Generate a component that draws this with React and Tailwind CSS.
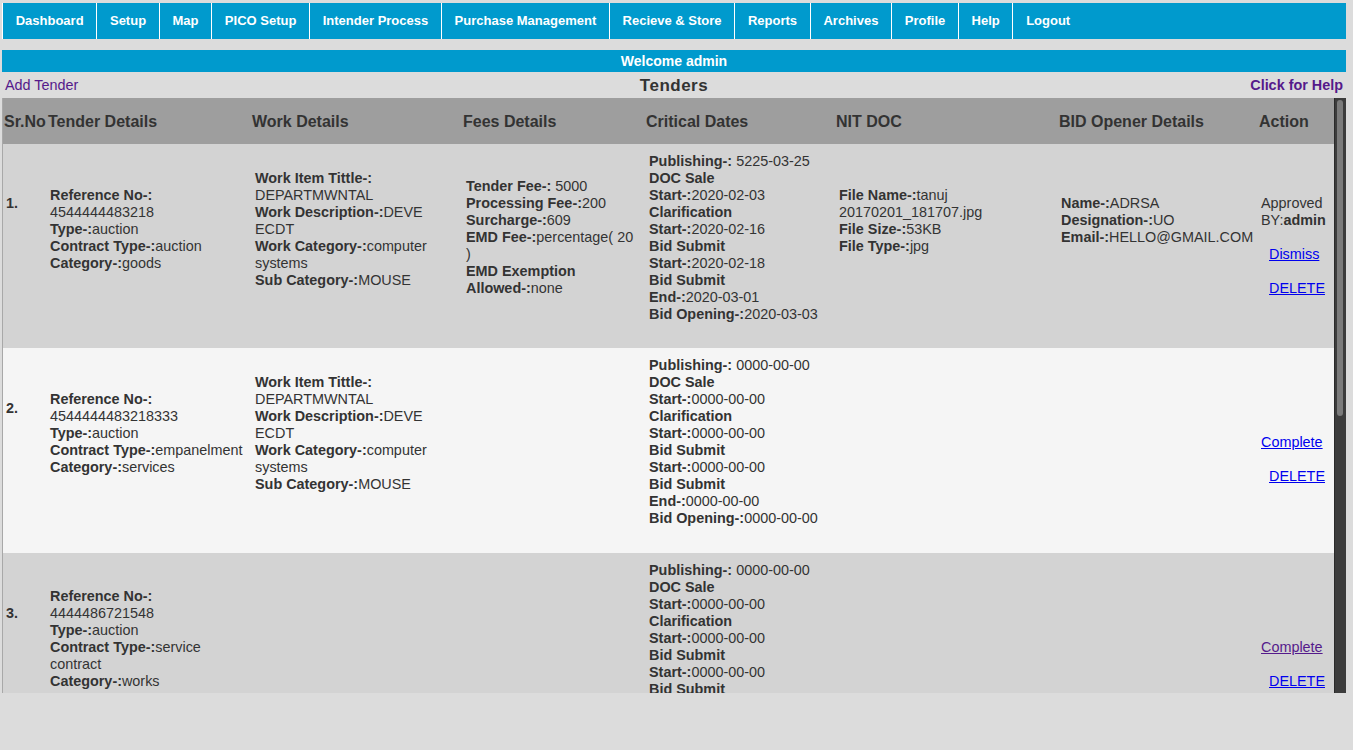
import React from 'react';

const navItems = [
  'Dashboard', 'Setup', 'Map', 'PICO Setup', 'Intender Process', 'Purchase Management',
  'Recieve & Store', 'Reports', 'Archives', 'Profile', 'Help', 'Logout',
];

const zeroDates = [
  ['Publishing-: ', '0000-00-00'], ['DOC Sale'], ['Start-:', '0000-00-00'], ['Clarification'],
  ['Start-:', '0000-00-00'], ['Bid Submit'], ['Start-:', '0000-00-00'], ['Bid Submit'],
  ['End-:', '0000-00-00'], ['Bid Opening-:', '0000-00-00'],
];

const workLines = [
  ['Work Item Tittle-:'], [null, 'DEPARTMWNTAL'], ['Work Description-:', 'DEVE'], [null, 'ECDT'],
  ['Work Category-:', 'computer'], [null, 'systems'], ['Sub Category-:', 'MOUSE'],
];

// Lines in a cell + blank lines after it (keeps the original's off-centre look)
const Cell = ({ lines = [], pad = 0, children }) => (
  <td className="align-middle pl-[3px] pr-[1px] text-[14.4px] leading-[17px] text-[#333] overflow-hidden">
    {lines.map((l, i) => (
      <div key={i} className="whitespace-nowrap">
        {l[0] && <b>{l[0]}</b>}
        {l[1]}
      </div>
    ))}
    {children}
    {Array.from({ length: pad }).map((_, i) => <div key={'p' + i} className="h-[17px]" />)}
  </td>
);

const Blank = () => <div className="h-[17px]" />;

const Link = ({ children, visited, className = '' }) => (
  <a href="#" className={`underline ${visited ? 'text-[#551a8b]' : 'text-[#0000ee]'} ${className}`}>
    {children}
  </a>
);

const App = () => {
  return (
    <div className="min-h-[750px] bg-[#dcdcdc] font-['Liberation_Sans',Arial,sans-serif] overflow-hidden">
      <div className="pl-[2px] w-[1346px]">
        {/* top nav */}
        <nav className="mt-[3px] h-[36px] bg-[#009acd] flex">
          {navItems.map((n) => (
            <div key={n} className="flex items-center px-[12.7px] border-l border-white text-white text-[13px] font-bold whitespace-nowrap">
              {n}
            </div>
          ))}
        </nav>

        <div className="mt-[11px] h-[22px] bg-[#009acd] flex items-center justify-center text-white text-[14px] font-bold">
          Welcome admin
        </div>

        <div className="h-[26px] pt-[2px] flex items-center justify-between px-[3px]">
          <a href="#" className="text-[14.4px] text-[#551a8b] w-[200px]">Add Tender</a>
          <span className="text-[17px] font-bold text-[#333] tracking-[0.5px]">Tenders</span>
          <a href="#" className="text-[14.4px] font-bold text-[#551a8b] w-[200px] text-right">Click for Help</a>
        </div>

        {/* table area */}
        <div className="flex h-[595px] border-l border-[#a8a8a8]">
          <div className="flex-1 overflow-hidden">
            <table className="table-fixed border-collapse w-[1331px]">
              <colgroup>
                <col className="w-[44px]" />
                <col className="w-[205px]" />
                <col className="w-[211px]" />
                <col className="w-[183px]" />
                <col className="w-[190px]" />
                <col className="w-[222px]" />
                <col className="w-[200px]" />
                <col className="w-[76px]" />
              </colgroup>
              <thead>
                <tr className="h-[46px] bg-[#9e9e9e] text-[#333] text-[16px] font-bold text-left">
                  <th className="pl-[1px] pt-[2px] whitespace-nowrap">Sr.No</th>
                  <th className="pl-[1px] pt-[2px]">Tender Details</th>
                  <th className="pl-0 pt-[2px]">Work Details</th>
                  <th className="pl-0 pt-[2px]">Fees Details</th>
                  <th className="pl-0 pt-[2px]">Critical Dates</th>
                  <th className="pl-0 pt-[2px]">NIT DOC</th>
                  <th className="pl-[1px] pt-[2px]">BID Opener Details</th>
                  <th className="pl-[1px] pt-[2px]">Action</th>
                </tr>
              </thead>
              <tbody>
                <tr className="h-[204px] bg-[#d3d3d3]">
                  <Cell lines={[['1.']]} pad={5} />
                  <Cell
                    lines={[['Reference No-:'], [null, '4544444483218'], ['Type-:', 'auction'], ['Contract Type-:', 'auction'], ['Category-:', 'goods']]}
                    pad={2}
                  />
                  <Cell lines={workLines} pad={2} />
                  <Cell
                    lines={[['Tender Fee-: ', '5000'], ['Processing Fee-:', '200'], ['Surcharge-:', '609'], ['EMD Fee-:', 'percentage( 20'], [null, ')'], ['EMD Exemption'], ['Allowed-:', 'none']]}
                    pad={1}
                  />
                  <Cell
                    lines={[['Publishing-: ', '5225-03-25'], ['DOC Sale'], ['Start-:', '2020-02-03'], ['Clarification'], ['Start-:', '2020-02-16'], ['Bid Submit'], ['Start-:', '2020-02-18'], ['Bid Submit'], ['End-:', '2020-03-01'], ['Bid Opening-:', '2020-03-03']]}
                    pad={1}
                  />
                  <Cell lines={[['File Name-:', 'tanuj'], [null, '20170201_181707.jpg'], ['File Size-:', '53KB'], ['File Type-:', 'jpg']]} pad={3} />
                  <Cell lines={[['Name-:', 'ADRSA'], ['Designation-:', 'UO'], ['Email-:', 'HELLO@GMAIL.COM']]} pad={3} />
                  <Cell>
                    <div className="whitespace-nowrap">Approved</div>
                    <div className="whitespace-nowrap">BY:<b>admin</b></div>
                    <Blank />
                    <div><Link className="ml-2">Dismiss</Link></div>
                    <Blank />
                    <div><Link className="ml-2">DELETE</Link></div>
                  </Cell>
                </tr>

                <tr className="h-[205px] bg-[#f5f5f5]">
                  <Cell lines={[['2.']]} pad={5} />
                  <Cell
                    lines={[['Reference No-:'], [null, '4544444483218333'], ['Type-:', 'auction'], ['Contract Type-:', 'empanelment'], ['Category-:', 'services']]}
                    pad={2}
                  />
                  <Cell lines={workLines} pad={2} />
                  <Cell />
                  <Cell lines={zeroDates} pad={1} />
                  <Cell />
                  <Cell />
                  <Cell>
                    <Blank />
                    <div><Link>Complete</Link></div>
                    <Blank />
                    <div><Link className="ml-2">DELETE</Link></div>
                  </Cell>
                </tr>

                <tr className="h-[205px] bg-[#d3d3d3]">
                  <Cell lines={[['3.']]} pad={5} />
                  <Cell
                    lines={[['Reference No-:'], [null, '4444486721548'], ['Type-:', 'auction'], ['Contract Type-:', 'service'], [null, 'contract'], ['Category-:', 'works']]}
                    pad={2}
                  />
                  <Cell />
                  <Cell />
                  <Cell lines={zeroDates} pad={1} />
                  <Cell />
                  <Cell />
                  <Cell>
                    <Blank />
                    <div><Link visited>Complete</Link></div>
                    <Blank />
                    <div><Link className="ml-2">DELETE</Link></div>
                  </Cell>
                </tr>
              </tbody>
            </table>
          </div>

          {/* scrollbar */}
          <div className="w-[12px] bg-[#3c3c3c] border-l border-[#2a2a2a] flex flex-col">
            <div className="mt-[2px] ml-[2px] w-[6px] h-[316px] rounded-full bg-[#7b7b7b]" />
          </div>
        </div>
      </div>
    </div>
  );
};

export default App;
